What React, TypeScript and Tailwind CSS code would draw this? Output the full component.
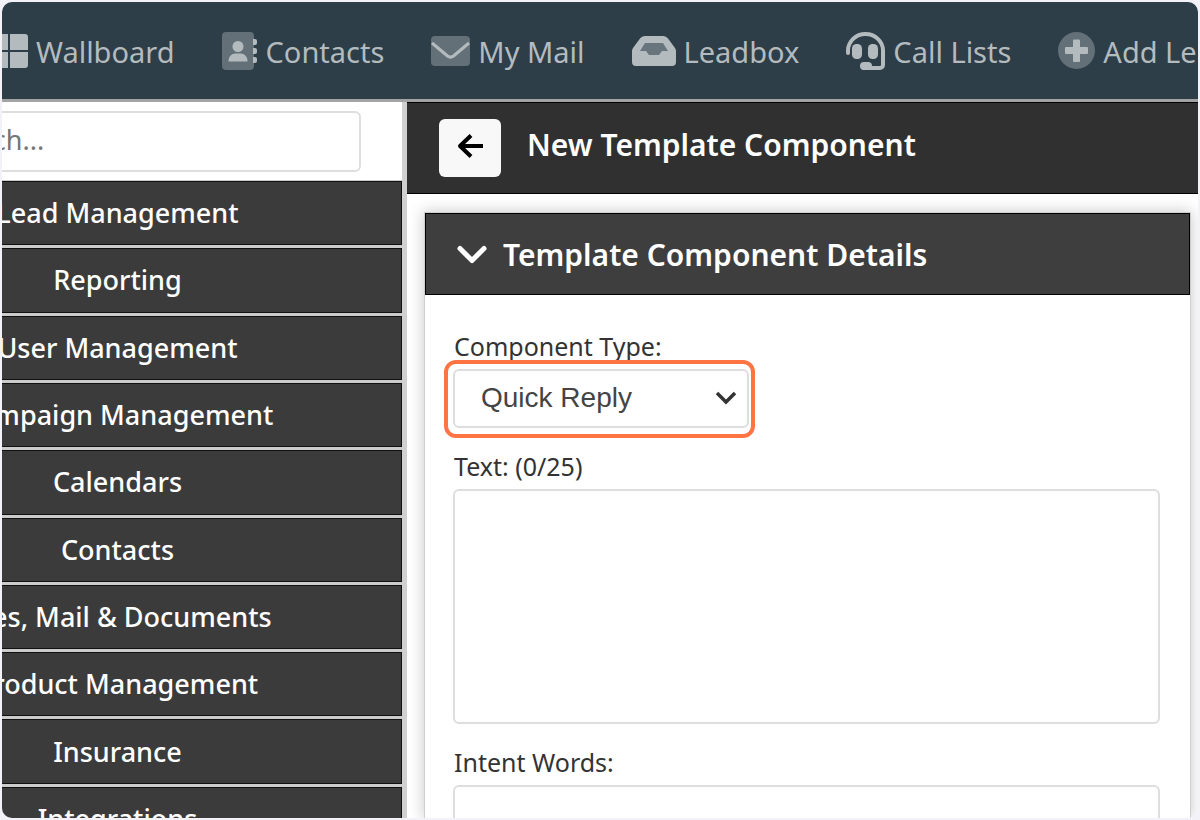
import { useState } from 'react'
import type { ReactNode } from 'react'

const WallboardIcon = () => (
  <svg viewBox="0 0 38 34" className="w-[38px] h-[34px]" fill="currentColor" aria-hidden="true">
    <path d="M3 0h15v16H0V3a3 3 0 0 1 3-3zM20 0h15a3 3 0 0 1 3 3v13H20zM0 18h18v16H3a3 3 0 0 1-3-3zM20 18h18v13a3 3 0 0 1-3 3H20z" />
  </svg>
)

const ContactsIcon = () => (
  <svg viewBox="0 0 36 38" className="w-9 h-[38px]" fill="currentColor" aria-hidden="true">
    <rect width="32" height="38" rx="4" opacity="0.4" />
    <circle cx="16" cy="14.500" r="5.500" />
    <path d="M6.500 29.500c0-5 3-8 7-8h5c4 0 7 3 7 8z" />
    <path d="M31 7h2a2 2 0 0 1 2 2v2a2 2 0 0 1-2 2h-2zM31 16h2a2 2 0 0 1 2 2v2a2 2 0 0 1-2 2h-2zM31 25h2a2 2 0 0 1 2 2v2a2 2 0 0 1-2 2h-2z" />
  </svg>
)

const MailIcon = () => (
  <svg viewBox="0 0 39 30" className="w-[39px] h-[30px]" fill="none" aria-hidden="true">
    <rect width="39" height="30" rx="4" fill="currentColor" opacity="0.4" />
    <path d="M1 7l15.500 13a5 5 0 0 0 6 0L38 7" stroke="currentColor" strokeWidth="3" />
  </svg>
)

const LeadboxIcon = () => (
  <svg viewBox="0 0 44 30" className="w-11 h-[30px]" aria-hidden="true">
    <path
      fill="currentColor"
      d="M13 0h18a6 6 0 0 1 5 2.500l7 9.500a6 6 0 0 1 1 3.500V26a4 4 0 0 1-4 4H4a4 4 0 0 1-4-4V15.500a6 6 0 0 1 1-3.500L8 2.500A6 6 0 0 1 13 0z"
    />
    <path fill="currentColor" d="M13 7h18l5 8h-6l-3 4H17l-3-4H8z" className="text-[#68757d]" />
  </svg>
)

const CallListsIcon = () => (
  <svg viewBox="0 0 39 38" className="w-[39px] h-[38px]" aria-hidden="true">
    <path
      d="M2 21v-2.500a17.500 16.500 0 0 1 35 0V33a3 3 0 0 1-3 3H18"
      fill="none"
      stroke="currentColor"
      strokeWidth="4"
      strokeLinecap="round"
    />
    <rect x="6" y="12" width="10" height="15" rx="4.500" fill="currentColor" />
    <rect x="22" y="12" width="10" height="15" rx="4.500" fill="currentColor" />
    <rect x="14" y="30" width="12" height="8" rx="4" fill="currentColor" />
  </svg>
)

const AddIcon = () => (
  <svg viewBox="0 0 37 37" className="w-[37px] h-[37px]" fill="currentColor" aria-hidden="true">
    <circle cx="18.500" cy="18.500" r="18.500" opacity="0.4" />
    <path d="M15 8.500a1 1 0 0 1 1-1h5a1 1 0 0 1 1 1V15h7a1 1 0 0 1 1 1v5a1 1 0 0 1-1 1h-7v7a1 1 0 0 1-1 1h-5a1 1 0 0 1-1-1v-7H8a1 1 0 0 1-1-1v-5a1 1 0 0 1 1-1h7z" />
  </svg>
)

const navItems: { label: string; icon: ReactNode }[] = [
  { label: 'Wallboard', icon: <WallboardIcon /> },
  { label: 'Contacts', icon: <ContactsIcon /> },
  { label: 'My Mail', icon: <MailIcon /> },
  { label: 'Leadbox', icon: <LeadboxIcon /> },
  { label: 'Call Lists', icon: <CallListsIcon /> },
  { label: 'Add Lead', icon: <AddIcon /> },
]

const sections = [
  'Lead Management',
  'Reporting',
  'User Management',
  'Campaign Management',
  'Calendars',
  'Contacts',
  'Files, Mail & Documents',
  'Product Management',
  'Insurance',
  'Integrations',
]

export default function App() {
  const [search, setSearch] = useState('')
  const [componentType, setComponentType] = useState('Quick Reply')
  const [text, setText] = useState('')
  const [intentWords, setIntentWords] = useState('')

  return (
    <div className="h-screen bg-[#f2f2f8] p-0.5 font-['Noto_Sans',sans-serif]">
      <div className="flex h-full flex-col overflow-hidden rounded-[10px] bg-white">
        <nav className="flex h-[100px] shrink-0 items-center gap-[47px] overflow-hidden border-b-3 border-[#a3a3a3] bg-[#2d3e48] text-[29px] leading-10 text-[#b4bbbf]">
          {navItems.map((item) => (
            <a key={item.label} href="#" className="flex shrink-0 items-center gap-2 whitespace-nowrap first:-ml-3">
              {item.icon}
              <span className="pt-0.5">{item.label}</span>
            </a>
          ))}
        </nav>

        <div className="flex min-h-0 flex-1">
          <aside className="-ml-[170px] w-[570px] shrink-0 overflow-hidden">
            <div className="px-[41px] pt-[9px] pb-2">
              <input
                type="search"
                aria-label="Search"
                placeholder="Search..."
                value={search}
                onChange={(e) => setSearch(e.target.value)}
                className="h-[61px] w-full rounded-md border-2 border-[#dedede] bg-white pb-1 pl-[62px] text-[27px] text-[#333] placeholder:text-[#757575]"
              />
            </div>
            <div className="grid h-[671px] auto-rows-fr gap-[3px] bg-[#cccccc] pt-px">
              {sections.map((section) => (
                <button
                  key={section}
                  type="button"
                  className="border border-[#111] bg-[#3b3b3b] pl-px text-center text-[27px] leading-9 font-medium text-white"
                >
                  {section}
                </button>
              ))}
            </div>
          </aside>

          <main className="flex min-w-0 flex-1 flex-col border-l-5 border-[#d0d0d0]">
            <header className="flex h-[92px] shrink-0 items-center gap-[26px] border-y border-black bg-[#303030] pl-8">
              <button
                type="button"
                aria-label="Back"
                className="flex h-[58px] w-[62px] items-center justify-center rounded-md bg-[#f8f8f8] pb-1 text-black"
              >
                <svg viewBox="0 0 26 24" className="h-6 w-[26px]" fill="none" stroke="currentColor" strokeWidth="4" strokeLinejoin="round" aria-hidden="true">
                  <path d="M14 1.500L3 12L14 22.500M3 12h23" />
                </svg>
              </button>
              <h1 className="pb-1.5 text-[30px] leading-10 font-semibold whitespace-nowrap text-white">New Template Component</h1>
            </header>

            <div className="min-h-0 flex-1 overflow-hidden px-[17px] pt-[18px] pr-[7px]">
              <section className="h-full border border-b-0 border-[#cfcfcf] bg-white shadow-[0_0_14px_1px_rgba(0,0,0,0.2)]">
                <h2 className="flex h-[82px] items-center border border-black bg-[#3e3e3e] text-[30px] leading-10 font-semibold text-white">
                  <button type="button" aria-expanded="true" className="flex items-center gap-4 pt-0.5 pl-[31px] whitespace-nowrap">
                    <svg viewBox="0 0 30 20" className="h-5 w-[30px]" fill="none" stroke="currentColor" strokeWidth="5" strokeLinecap="round" strokeLinejoin="round" aria-hidden="true">
                      <path d="M3 3.500l12 12l12-12" />
                    </svg>
                    Template Component Details
                  </button>
                </h2>

                <form className="flex flex-col pt-[31px] pr-[30px] pl-7 text-[25px] leading-10 text-[#333]">
                  <label htmlFor="component-type" className="pb-[3px] pl-px">Component Type:</label>
                  <div className="relative w-[296px]">
                    <select
                      id="component-type"
                      value={componentType}
                      onChange={(e) => setComponentType(e.target.value)}
                      className="block h-[59px] w-full appearance-none rounded-md border-2 border-[#dedede] bg-white pb-px pl-[26px] font-['Liberation_Sans',Arial,sans-serif] text-[28px] text-[#444]"
                    >
                      <option>Quick Reply</option>
                      <option>Call To Action</option>
                    </select>
                    <svg viewBox="0 0 22 14" className="pointer-events-none absolute top-[22px] right-3 h-3.5 w-[22px]" fill="none" stroke="#333" strokeWidth="3.500" aria-hidden="true">
                      <path d="M2 2l9 9l9-9" />
                    </svg>
                    <div className="pointer-events-none absolute -top-[9px] -right-1.5 -bottom-[10px] -left-[9px] rounded-xl border-4 border-[#ff7442]" />
                  </div>

                  <label htmlFor="text" className="mt-[18px] pb-[3px] pl-px">Text: ({text.length}/25)</label>
                  <textarea
                    id="text"
                    maxLength={25}
                    value={text}
                    onChange={(e) => setText(e.target.value)}
                    className="h-[235px] w-full resize-none rounded-md border-2 border-[#dedede] bg-white p-3"
                  />

                  <label htmlFor="intent-words" className="mt-[18px] pb-[3px] pl-px">Intent Words:</label>
                  <input
                    id="intent-words"
                    type="text"
                    value={intentWords}
                    onChange={(e) => setIntentWords(e.target.value)}
                    className="h-[60px] w-full rounded-md border-2 border-[#dedede] bg-white px-3"
                  />
                </form>
              </section>
            </div>
          </main>
        </div>
      </div>
    </div>
  )
}
